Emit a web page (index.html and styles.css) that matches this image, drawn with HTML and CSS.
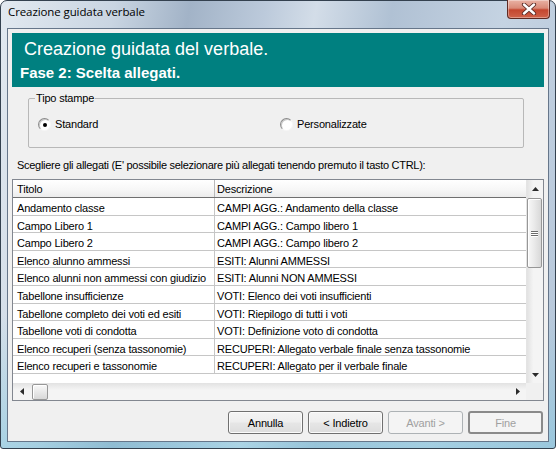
FILE: index.html
```html
<!DOCTYPE html>
<html lang="it">
<head>
<meta charset="utf-8">
<title>Creazione guidata verbale</title>
<link rel="stylesheet" href="styles.css">
</head>
<body>
<div class="window">
  <div class="titlebar">
    <span class="title">Creazione guidata verbale</span>
    <div class="close">
      <svg width="18" height="12" viewBox="0 0 18 12">
        <path d="M4 1.5 L14 10.5 M14 1.5 L4 10.5" stroke="#5a2a24" stroke-width="4.2" stroke-linecap="round" fill="none"/>
        <path d="M4 1.5 L14 10.5 M14 1.5 L4 10.5" stroke="#ffffff" stroke-width="2.4" stroke-linecap="round" fill="none"/>
      </svg>
    </div>
  </div>
  <div class="client">
    <div class="banner">
      <div class="banner-title">Creazione guidata del verbale.</div>
      <div class="banner-sub">Fase 2: Scelta allegati.</div>
    </div>

    <fieldset class="group">
      <legend>Tipo stampe</legend>
      <div class="radios">
        <div class="radio"><span class="radio-dot checked"></span><span>Standard</span></div>
        <div class="radio"><span class="radio-dot"></span><span>Personalizzate</span></div>
      </div>
    </fieldset>

    <div class="hint">Scegliere gli allegati (E' possibile selezionare più allegati tenendo premuto il tasto CTRL):</div>

    <div class="listview">
      <div class="lv-top">
        <div class="lv-body">
          <div class="lv-row lv-head"><div class="c1">Titolo</div><div class="c2">Descrizione</div></div>
          <div class="lv-row"><div class="c1">Andamento classe</div><div class="c2">CAMPI AGG.: Andamento della classe</div></div>
          <div class="lv-row"><div class="c1">Campo Libero 1</div><div class="c2">CAMPI AGG.: Campo libero 1</div></div>
          <div class="lv-row"><div class="c1">Campo Libero 2</div><div class="c2">CAMPI AGG.: Campo libero 2</div></div>
          <div class="lv-row"><div class="c1">Elenco alunno ammessi</div><div class="c2">ESITI: Alunni AMMESSI</div></div>
          <div class="lv-row"><div class="c1">Elenco alunni non ammessi con giudizio</div><div class="c2">ESITI: Alunni NON AMMESSI</div></div>
          <div class="lv-row"><div class="c1">Tabellone insufficienze</div><div class="c2">VOTI: Elenco dei voti insufficienti</div></div>
          <div class="lv-row"><div class="c1">Tabellone completo dei voti ed esiti</div><div class="c2">VOTI: Riepilogo di tutti i voti</div></div>
          <div class="lv-row"><div class="c1">Tabellone voti di condotta</div><div class="c2">VOTI: Definizione voto di condotta</div></div>
          <div class="lv-row"><div class="c1">Elenco recuperi (senza tassonomie)</div><div class="c2">RECUPERI: Allegato verbale finale senza tassonomie</div></div>
          <div class="lv-row"><div class="c1">Elenco recuperi e tassonomie</div><div class="c2">RECUPERI: Allegato per il verbale finale</div></div>
        </div>
        <div class="vscroll">
          <div class="sb-btn"><svg width="7" height="4" viewBox="0 0 7 4"><path d="M0 4 L3.5 0 L7 4 Z" fill="#2b2b2b"/></svg></div>
          <div class="sb-track-v">
            <div class="thumb-v"><span class="grip"></span><span class="grip"></span><span class="grip"></span></div>
          </div>
          <div class="sb-btn"><svg width="7" height="4" viewBox="0 0 7 4"><path d="M0 0 L7 0 L3.5 4 Z" fill="#2b2b2b"/></svg></div>
        </div>
      </div>
      <div class="lv-bottom">
        <div class="hscroll">
          <div class="sb-btn"><svg width="4" height="7" viewBox="0 0 4 7"><path d="M4 0 L4 7 L0 3.5 Z" fill="#2b2b2b"/></svg></div>
          <div class="thumb-h"></div>
          <div class="sb-track-h"></div>
          <div class="sb-btn"><svg width="4" height="7" viewBox="0 0 4 7"><path d="M0 0 L4 3.5 L0 7 Z" fill="#2b2b2b"/></svg></div>
        </div>
        <div class="corner"></div>
      </div>
    </div>

    <div class="buttons">
      <div class="btn">Annulla</div>
      <div class="btn">&lt; Indietro</div>
      <div class="btn disabled">Avanti &gt;</div>
      <div class="btn disabled default">Fine</div>
    </div>
  </div>
</div>
</body>
</html>
```

FILE: styles.css
```css
* { box-sizing: border-box; }
html, body { margin: 0; padding: 0; }
body { width: 556px; height: 449px; overflow: hidden; background: #ffffff; }

.window {
  width: 556px;
  height: 449px;
  border: 1px solid #34414f;
  border-radius: 7px 7px 3px 3px;
  padding: 0 6px 6px 6px;
  display: flex;
  flex-direction: column;
  background:
    linear-gradient(to bottom, rgba(255,255,255,0) 70%, rgba(120,200,225,0.45) 100%),
    linear-gradient(100deg, #e2e9f0 0%, #c9d5e2 18%, #a2b3c7 30%, #bccadb 42%, #d3dde8 50%, #b0c1d4 62%, #c5d3e2 80%, #b6c7da 100%);
  font-family: "Liberation Sans", Arial, sans-serif;
  font-size: 11px;
  color: #000;
}

.titlebar {
  height: 27px;
  flex: none;
  position: relative;
  display: flex;
  align-items: center;
}
.title {
  font-family: "Open Sans", "Noto Sans", sans-serif;
  font-size: 11.5px;
  color: #000;
  padding-left: 1px;
  padding-bottom: 6px;
  letter-spacing: -0.1px;
}
.close {
  position: absolute;
  top: -1px;
  right: -1px;
  width: 43px;
  height: 19px;
  border: 1px solid #5e2a22;
  border-top: none;
  border-radius: 0 0 4px 4px;
  background: linear-gradient(to bottom, #e9b2a4 0%, #d98a78 45%, #c4462f 55%, #d0634a 100%);
  display: flex;
  align-items: center;
  justify-content: center;
  box-shadow: inset 0 0 0 1px rgba(255,255,255,0.35);
}

.client {
  flex: 1;
  border: 1px solid #66768a;
  background: #f0f0f0;
  padding: 4px 4px 0 4px;
  display: flex;
  flex-direction: column;
}

.banner {
  background: #008080;
  height: 54px;
  flex: none;
  color: #fff;
  padding-top: 6px;
}
.banner-title {
  font-size: 18px;
  line-height: 21px;
  padding-left: 12px;
}
.banner-sub {
  font-size: 15px;
  font-weight: bold;
  line-height: 16px;
  padding-left: 8px;
  margin-top: 5px;
}

.group {
  margin: 5px 20px 0 16px;
  border: 1px solid #b8b8b8;
  border-radius: 2px;
  padding: 0 0 0 9px;
  height: 56px;
  flex: none;
}
.group legend {
  padding: 0 1px;
  margin-left: -3px;
  line-height: 13px;
  font-size: 11px;
  letter-spacing: -0.18px;
}
.radios {
  display: grid;
  grid-template-columns: 242px auto;
  margin-top: 13px;
  letter-spacing: -0.18px;
}
.radio {
  display: flex;
  align-items: center;
  gap: 4px;
  line-height: 13px;
}
.radio-dot {
  width: 13px;
  height: 13px;
  border-radius: 50%;
  border: 1px solid;
  border-color: #8a8a8a #f6f6f6 #f6f6f6 #8a8a8a;
  background: #fff;
  box-shadow: inset 1px 1px 0 #c8c8c8;
  display: flex;
  align-items: center;
  justify-content: center;
}
.radio-dot.checked::after {
  content: "";
  width: 4px;
  height: 4px;
  border-radius: 50%;
  background: #000;
}

.hint {
  margin-top: 11px;
  margin-bottom: 8px;
  padding-left: 5px;
  line-height: 12px;
  white-space: nowrap;
  letter-spacing: -0.28px;
}

.listview {
  height: 222px;
  flex: none;
  border: 1px solid #828790;
  background: #fff;
  display: flex;
  flex-direction: column;
  letter-spacing: -0.18px;
}
.lv-top {
  flex: 1;
  display: flex;
  min-height: 0;
}
.lv-body {
  flex: 1;
  overflow: hidden;
}
.lv-row {
  display: flex;
  height: 17.6px;
  border-bottom: 1px solid #c6c6c6;
  white-space: nowrap;
  line-height: 15px;
  padding-top: 3px;
}
.lv-row .c1 {
  width: 202px;
  flex: none;
  padding-left: 4px;
  margin-top: -3px;
  padding-top: 3px;
  border-right: 1px solid #c6c6c6;
  overflow: hidden;
}
.lv-row .c2 {
  padding-left: 2px;
}
.lv-head {
  height: 18px;
  padding-top: 2px;
  border-bottom: 1px solid #6f6f6f;
  background: linear-gradient(to bottom, #ffffff 0%, #f7f7f7 55%, #ececec 100%);
}
.lv-head .c1 { border-right-color: #b9b9b9; margin-top: -2px; padding-top: 2px; }
.lv-head .c2 { flex: 1; }

.vscroll {
  width: 17px;
  flex: none;
  display: flex;
  flex-direction: column;
  background: linear-gradient(to right, #e2e2e2, #f4f4f4 40%, #f4f4f4);
  border-left: 1px solid #e4e4e4;
}
.sb-btn {
  width: 17px;
  height: 17px;
  flex: none;
  display: flex;
  align-items: center;
  justify-content: center;
}
.sb-track-v {
  flex: 1;
}
.thumb-v {
  margin: 1px 1px 0 0;
  height: 70px;
  border: 1px solid #979797;
  border-radius: 2px;
  background: linear-gradient(to right, #f8f8f8, #e9e9e9 50%, #d8d8d8);
  box-shadow: inset 1px 1px 0 #ffffff;
  display: flex;
  flex-direction: column;
  align-items: center;
  justify-content: center;
  gap: 1px;
}
.grip {
  width: 7px;
  height: 1px;
  background: #6b6b6b;
  box-shadow: 0 1px 0 #ffffff;
}

.lv-bottom {
  height: 17px;
  flex: none;
  display: flex;
}
.hscroll {
  flex: 1;
  display: flex;
  background: linear-gradient(to bottom, #e2e2e2, #f4f4f4 40%, #f4f4f4);
}
.thumb-h {
  width: 16px;
  flex: none;
  margin: 1px 0 0 2px;
  border: 1px solid #979797;
  border-radius: 2px;
  background: linear-gradient(to bottom, #f8f8f8, #e9e9e9 50%, #d8d8d8);
  box-shadow: inset 1px 1px 0 #ffffff;
}
.sb-track-h { flex: 1; }
.corner {
  width: 17px;
  flex: none;
  background: #f0f0f0;
}

.buttons {
  display: flex;
  justify-content: flex-end;
  gap: 5px;
  margin-top: 10px;
  padding-right: 1px;
}
.btn {
  width: 75px;
  height: 23px;
  border: 1px solid #707070;
  border-radius: 3px;
  background: linear-gradient(to bottom, #f4f4f4 0%, #eeeeee 48%, #e6e6e6 52%, #dddddd 100%);
  box-shadow: inset 0 0 0 1px #fbfbfb;
  display: flex;
  align-items: center;
  justify-content: center;
  font-size: 11px;
  letter-spacing: -0.18px;
  color: #000;
}
.btn.disabled {
  color: #a0a0a0;
  background: #f4f4f4;
  border-color: #adb2b5;
  box-shadow: none;
}
.btn.default {
  border: 2px solid #8a8a8a;
}
```
